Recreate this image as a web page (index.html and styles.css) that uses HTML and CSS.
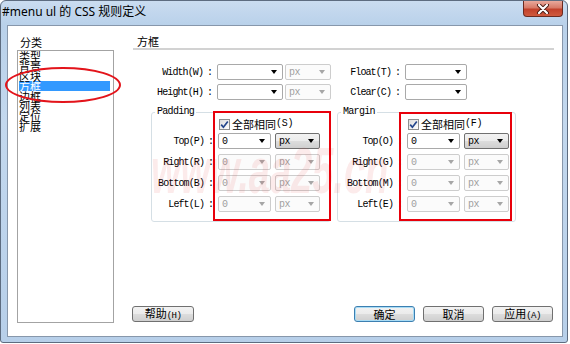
FILE: index.html
```html
<!DOCTYPE html>
<html lang="zh-CN">
<head>
    <meta charset="UTF-8">
    <title>#menu ul 的 CSS 规则定义</title>
    <link rel="stylesheet" href="styles.css">
</head>
<body>
    <div class="window">
        <div class="titlebar">
            <span class="title">#menu ul 的 CSS 规则定义</span>
            <div class="close-btn">
                <svg width="14" height="10" viewBox="0 0 14 10">
                    <path d="M3 1 L11 9 M11 1 L3 9" stroke="#4a1a12" stroke-width="4" stroke-linecap="round"/>
                    <path d="M3 1 L11 9 M11 1 L3 9" stroke="#fff" stroke-width="2.2" stroke-linecap="round"/>
                </svg>
            </div>
        </div>

        <div class="client">
            <div class="main">
                <div class="sidebar">
                    <div class="cap">分类</div>
                    <ul class="cat-list">
                        <li>类型</li>
                        <li>背景</li>
                        <li>区块</li>
                        <li class="selected">方框</li>
                        <li>边框</li>
                        <li>列表</li>
                        <li>定位</li>
                        <li>扩展</li>
                    </ul>
                </div>

                <div class="panel">
                    <div class="heading">方框</div>

                    <div class="size-grid">
                        <div class="row">
                            <span class="lbl">Width(W)</span><span class="colon">:</span>
                            <div class="select wide"><span></span><i class="arrow"></i></div>
                            <div class="select unit disabled"><span>px</span><i class="arrow"></i></div>
                        </div>
                        <div class="row right-col">
                            <span class="lbl">Float(T)</span><span class="colon">:</span>
                            <div class="select float"><span></span><i class="arrow"></i></div>
                        </div>
                        <div class="row">
                            <span class="lbl">Height(H)</span><span class="colon">:</span>
                            <div class="select wide"><span></span><i class="arrow"></i></div>
                            <div class="select unit disabled"><span>px</span><i class="arrow"></i></div>
                        </div>
                        <div class="row right-col">
                            <span class="lbl">Clear(C)</span><span class="colon">:</span>
                            <div class="select float"><span></span><i class="arrow"></i></div>
                        </div>
                    </div>

                    <div class="boxes">
                        <fieldset class="group padding">
                            <legend>Padding</legend>
                            <div class="row check-row">
                                <span class="lbl"></span><span class="colon"></span>
                                <label class="check">
                                    <span class="check-box">
                                        <svg width="9" height="9" viewBox="0 0 9 9"><path d="M1.2 4.6 L3.4 7.2 L7.8 1.4" fill="none" stroke="#24468c" stroke-width="1.7"/></svg>
                                    </span>
                                    全部相同<span class="key">(S)</span>
                                </label>
                            </div>
                            <div class="rows">
                                <div class="row">
                                    <span class="lbl">Top(P)</span><span class="colon">:</span>
                                    <div class="select"><span>0</span><i class="arrow"></i></div>
                                    <div class="select unit active"><span>px</span><i class="arrow"></i></div>
                                </div>
                                <div class="row">
                                    <span class="lbl">Right(R)</span><span class="colon">:</span>
                                    <div class="select disabled"><span>0</span><i class="arrow"></i></div>
                                    <div class="select unit disabled"><span>px</span><i class="arrow"></i></div>
                                </div>
                                <div class="row">
                                    <span class="lbl">Bottom(B)</span><span class="colon">:</span>
                                    <div class="select disabled"><span>0</span><i class="arrow"></i></div>
                                    <div class="select unit disabled"><span>px</span><i class="arrow"></i></div>
                                </div>
                                <div class="row">
                                    <span class="lbl">Left(L)</span><span class="colon">:</span>
                                    <div class="select disabled"><span>0</span><i class="arrow"></i></div>
                                    <div class="select unit disabled"><span>px</span><i class="arrow"></i></div>
                                </div>
                            </div>
                        </fieldset>

                        <fieldset class="group margin">
                            <legend>Margin</legend>
                            <div class="row check-row">
                                <span class="lbl"></span><span class="colon"></span>
                                <label class="check">
                                    <span class="check-box">
                                        <svg width="9" height="9" viewBox="0 0 9 9"><path d="M1.2 4.6 L3.4 7.2 L7.8 1.4" fill="none" stroke="#24468c" stroke-width="1.7"/></svg>
                                    </span>
                                    全部相同<span class="key">(F)</span>
                                </label>
                            </div>
                            <div class="rows">
                                <div class="row">
                                    <span class="lbl">Top(O)</span><span class="colon">:</span>
                                    <div class="select"><span>0</span><i class="arrow"></i></div>
                                    <div class="select unit active"><span>px</span><i class="arrow"></i></div>
                                </div>
                                <div class="row">
                                    <span class="lbl">Right(G)</span><span class="colon">:</span>
                                    <div class="select disabled"><span>0</span><i class="arrow"></i></div>
                                    <div class="select unit disabled"><span>px</span><i class="arrow"></i></div>
                                </div>
                                <div class="row">
                                    <span class="lbl">Bottom(M)</span><span class="colon">:</span>
                                    <div class="select disabled"><span>0</span><i class="arrow"></i></div>
                                    <div class="select unit disabled"><span>px</span><i class="arrow"></i></div>
                                </div>
                                <div class="row">
                                    <span class="lbl">Left(E)</span><span class="colon">:</span>
                                    <div class="select disabled"><span>0</span><i class="arrow"></i></div>
                                    <div class="select unit disabled"><span>px</span><i class="arrow"></i></div>
                                </div>
                            </div>
                        </fieldset>
                    </div>

                    <div class="buttons">
                        <button class="btn">帮助<span class="key">(H)</span></button>
                        <div class="btn-group">
                            <button class="btn btn-default">确定</button>
                            <button class="btn">取消</button>
                            <button class="btn">应用<span class="key">(A)</span></button>
                        </div>
                    </div>
                </div>
            </div>
        </div>

        <!-- annotations drawn over the screenshot -->
        <div class="watermark">www.aa25.cn</div>
        <div class="mark-ellipse"></div>
        <div class="mark-box mark-padding"></div>
        <div class="mark-box mark-margin"></div>
    </div>
</body>
</html>
```

FILE: styles.css
```css
body {
    margin: 0;
    background-color: #fff;
    font-family: "Noto Sans CJK SC", sans-serif;
    font-size: 11px;
    color: #000;
}

.window {
    position: relative; /* for the annotation marks */
    width: 566px;
    height: 341px;
    border: 1px solid #5d6c80;
    border-radius: 6px 6px 3px 3px;
    background: linear-gradient(to bottom, #cadcf0, #b9d1ea 24px, #c3d8ee 120px, #b7cfe9);
    display: flex;
    flex-direction: column;
    overflow: hidden;
}

.titlebar {
    height: 24px;
    display: flex;
    align-items: flex-start;
}

.title {
    padding: 2px 0 0 1px;
    line-height: 17px;
    font-family: "Noto Sans", "Noto Sans CJK SC", sans-serif;
    font-size: 12px;
    color: #000;
}

.close-btn {
    margin-left: auto;
    margin-right: 4px;
    width: 40px;
    height: 16px;
    box-sizing: border-box;
    border: 1px solid #6b2a20;
    border-top: none;
    border-radius: 0 0 4px 4px;
    background: linear-gradient(to bottom, #e9a99c, #d77a68 45%, #c2412b 55%, #cf5a3e);
    display: flex;
    align-items: center;
    justify-content: center;
}

.client {
    flex: 1;
    margin: 0 4px 5px 6px;
    background-color: #fff;
    border: 1px solid #8797ab;
}

.main {
    display: flex;
    gap: 19px;
    padding: 8px 8px 0 9px;
}

/* category list */
.sidebar {
    width: 97px;
}

.cap {
    line-height: 16px;
    padding-left: 3px;
}

.cat-list {
    margin: 0;
    padding: 0 0 0 1px;
    list-style: none;
    height: 271px;
    border: 1px solid #a3a3a3;
}

.cat-list li {
    height: 10px;
    line-height: 10px;
    margin-right: 3px;
    white-space: nowrap;
}

.cat-list li.selected {
    background-color: #3399ff;
    color: #fff;
}

/* right panel */
.panel {
    flex: 1;
    display: flex;
    flex-direction: column;
}

.heading {
    height: 14px;
    line-height: 14px;
    padding-left: 4px;
    border-bottom: 2px solid #d2d2d2;
}

.size-grid {
    display: grid;
    grid-template-columns: 202px 1fr;
    row-gap: 4px;
    margin-top: 14px;
}

.row {
    display: flex;
    align-items: center;
    height: 16px;
}

.lbl {
    width: 70px;
    text-align: right;
    font-family: "Liberation Mono", monospace;
    font-size: 10px;
    letter-spacing: -0.9px;
    white-space: nowrap;
}

.right-col .lbl {
    width: 56px;
}

.colon {
    width: 14px;
    text-align: center;
    font-family: "Liberation Mono", monospace;
    font-size: 10px;
}

.select {
    width: 53px;
    height: 16px;
    box-sizing: border-box;
    border: 1px solid #a9a9a9;
    border-radius: 2px;
    background-color: #fff;
    display: flex;
    align-items: center;
    padding-left: 3px;
    font-family: "Liberation Mono", monospace;
    font-size: 10px;
    letter-spacing: -0.5px;
}

.select .arrow {
    margin-left: auto;
    margin-right: 5px;
    border-top: 4px solid #000;
    border-left: 3px solid transparent;
    border-right: 3px solid transparent;
}

.select.wide {
    width: 66px;
}

.select.float {
    width: 62px;
}

.select.unit {
    width: 45px;
    margin-left: 4px;
}

.size-grid .select.unit {
    width: 46px;
    margin-left: 2px;
}

.select.active {
    border-color: #707070;
    background: linear-gradient(to bottom, #f2f2f2, #ebebeb 50%, #dddddd 50%, #cfcfcf);
}

.select.disabled {
    color: #a0a0a0;
    border-color: #cdcdcd;
    background-color: #fbfbfb;
}

.select.disabled .arrow {
    border-top-color: #a6a6a6;
}

/* padding / margin groups */
.boxes {
    display: flex;
    gap: 6px;
    margin: 7px 0 0 18px;
}

.group {
    margin: 0;
    padding: 0 0 9px 0;
    min-width: 0;
    border: 1px solid #d5dfe5;
    border-radius: 3px;
}

.group.padding {
    width: 178px;
}

.group.margin {
    width: 177px;
}

.group legend {
    margin-left: 3px;
    padding: 0 2px;
    line-height: 10px;
    font-family: "Liberation Mono", monospace;
    font-size: 10px;
    letter-spacing: -0.7px;
}

.group .lbl {
    width: 52px;
}

.group.margin .lbl {
    width: 55px;
}

.check-row {
    height: 12px;
    margin-top: 1px;
}

.check {
    display: flex;
    align-items: center;
    margin-left: 1px;
    line-height: 12px;
}

.check-box {
    width: 9px;
    height: 9px;
    margin-right: 2px;
    border: 1px solid #8e8f8f;
    background: linear-gradient(to bottom right, #dcdcdc, #fff);
    display: flex;
    align-items: center;
    justify-content: center;
}

.key {
    font-family: "Liberation Mono", monospace;
    font-size: 9px;
    letter-spacing: -0.5px;
}

.check .key {
    font-size: 10px;
    letter-spacing: -0.3px;
}

.rows {
    display: flex;
    flex-direction: column;
    gap: 5px;
    margin-top: 3px;
}

/* dialog buttons */
.buttons {
    margin-top: auto;
    margin-bottom: 1px;
    margin-left: -1px;
    display: flex;
    justify-content: space-between;
}

.btn-group {
    display: flex;
    gap: 8px;
    margin-right: 1px;
}

.btn {
    width: 62px;
    height: 16px;
    box-sizing: border-box;
    padding: 0;
    border: 1px solid #707070;
    border-radius: 3px;
    background: linear-gradient(to bottom, #f2f2f2, #ebebeb 50%, #dddddd 50%, #cfcfcf);
    font-family: "Noto Sans CJK SC", sans-serif;
    font-size: 11px;
    line-height: 13px;
    color: #000;
}

.btn-group .btn {
    width: 61px;
}

.btn-default {
    border-color: #3c7fb1;
    box-shadow: inset 0 0 0 1px #a9dcf5;
}

/* red marks and watermark laid over the screenshot */
.watermark {
    position: absolute;
    left: 150px;
    top: 138px;
    font-family: "Liberation Sans", sans-serif;
    font-size: 38px;
    font-weight: bold;
    font-style: italic;
    line-height: 38px;
    color: rgba(230, 70, 70, 0.11);
    transform: scaleY(1.7);
    transform-origin: top left;
    pointer-events: none;
}

.mark-ellipse {
    position: absolute;
    left: 4px;
    top: 66px;
    width: 112px;
    height: 32px;
    border: 2px solid #e3141b;
    border-radius: 50%;
}

.mark-box {
    position: absolute;
    border: 2px solid #e8000b;
}

.mark-padding {
    left: 212px;
    top: 110px;
    width: 114px;
    height: 106px;
}

.mark-margin {
    left: 398px;
    top: 111px;
    width: 109px;
    height: 105px;
}
```
